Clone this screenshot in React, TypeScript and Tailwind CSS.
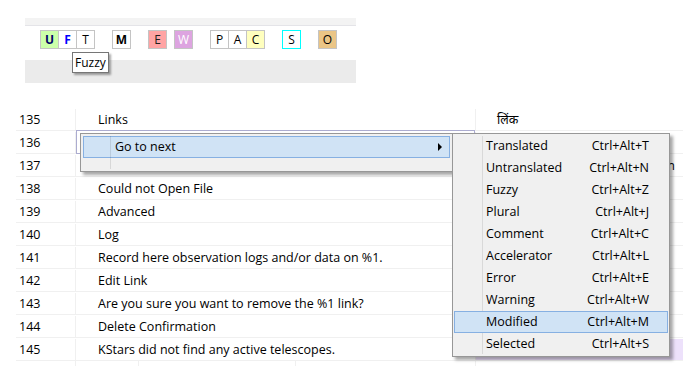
const font = "font-['Open_Sans','Noto_Sans',sans-serif]";

const filterButtons = [
  { key: "U", gap: "ml-0", cls: "bg-[#ccffaa] text-[#000066] font-bold" },
  { key: "F", gap: "-ml-px", cls: "bg-white text-[#0000ff] font-bold" },
  { key: "T", gap: "-ml-px", cls: "bg-white text-black" },
  { key: "M", gap: "ml-[17px]", cls: "bg-white text-black font-bold" },
  { key: "E", gap: "ml-[17px]", cls: "bg-[#ffa4a4] text-[#202020]" },
  { key: "W", gap: "ml-[7px]", cls: "bg-[#dda4e0] text-white" },
  { key: "P", gap: "ml-[17px]", cls: "bg-white text-black" },
  { key: "A", gap: "-ml-px", cls: "bg-white text-black" },
  { key: "C", gap: "-ml-px", cls: "bg-[#ffffbe] text-black" },
  { key: "S", gap: "ml-[17px]", cls: "bg-white text-black !border-[#00ffff]" },
  { key: "O", gap: "ml-[17px]", cls: "bg-[#eac586] text-black" },
];

const rows = [
  { n: 135, src: "Links", tr: "लिंक" },
  { n: 136, src: "", tr: "" },
  { n: 137, src: "", tr: "Translation" },
  { n: 138, src: "Could not Open File", tr: "" },
  { n: 139, src: "Advanced", tr: "" },
  { n: 140, src: "Log", tr: "" },
  { n: 141, src: "Record here observation logs and/or data on %1.", tr: "" },
  { n: 142, src: "Edit Link", tr: "" },
  { n: 143, src: "Are you sure you want to remove the %1 link?", tr: "" },
  { n: 144, src: "Delete Confirmation", tr: "" },
  { n: 145, src: "KStars did not find any active telescopes.", tr: "" },
];

const subItems = [
  { label: "Translated", keys: "Ctrl+Alt+T" },
  { label: "Untranslated", keys: "Ctrl+Alt+N" },
  { label: "Fuzzy", keys: "Ctrl+Alt+Z" },
  { label: "Plural", keys: "Ctrl+Alt+J" },
  { label: "Comment", keys: "Ctrl+Alt+C" },
  { label: "Accelerator", keys: "Ctrl+Alt+L" },
  { label: "Error", keys: "Ctrl+Alt+E" },
  { label: "Warning", keys: "Ctrl+Alt+W" },
  { label: "Modified", keys: "Ctrl+Alt+M", active: true },
  { label: "Selected", keys: "Ctrl+Alt+S" },
];

export default function App() {
  return (
    <div className={`relative h-[384px] w-[695px] overflow-hidden bg-white text-[12.5px] text-black ${font}`}>
      {/* filter bar */}
      <div className="ml-[25px] w-[331px] pt-[18px] text-[12px]">
        <div className="h-[8px] border-b border-[#e4e4e8] bg-[#f3f3f3]" />
        <div className="flex h-[34px] pl-[15px] pt-[4px]">
          {filterButtons.map((b) => (
            <div
              key={b.key}
              className={`flex h-[19px] w-[19px] items-center justify-center border border-[#c4c4c4] leading-none ${b.gap} ${b.cls}`}
            >
              {b.key}
            </div>
          ))}
        </div>
        <div className="h-[23px] bg-[#ebebeb]" />
      </div>

      {/* tooltip */}
      <div className="absolute left-[72px] top-[52px] border border-[#767676] bg-white px-[2px] text-[12px] leading-[19px] shadow-[2px_2px_2px_rgba(0,0,0,0.35)]">
        Fuzzy
      </div>

      {/* table */}
      <div className="ml-[16px] mt-[25px] w-[667px]">
        {rows.map((r) => (
          <div key={r.n} className="flex h-[23px] border-b border-[#f0f0f0] pt-px leading-[21px]">
            <div className="w-[60px] border-r border-[#f0f0f0] pl-[3px]">{r.n}</div>
            <div className="relative w-[400px] border-r border-[#f0f0f0] pl-[22px]">
              {r.n === 136 && (
                <div className="absolute -top-[2px] left-0 right-0 h-[24px] border border-[#acacd0]" />
              )}
              {r.src}
            </div>
            <div
              className={`flex-1 whitespace-nowrap pl-[21px] ${
                r.n === 145 ? "bg-[#ede1fb]" : ""
              } ${r.n === 137 ? "flex justify-end pr-[8px]" : ""}`}
            >
              {r.tr}
            </div>
          </div>
        ))}
        <div className="flex h-[5px]">
          <div className="w-[60px] border-r border-[#f0f0f0]" />
          <div className="w-[63px] border-r border-[#f0f0f0]" />
          <div className="w-[157px] border-r border-[#f0f0f0]" />
          <div className="w-[180px] border-r border-[#f0f0f0]" />
        </div>
      </div>

      {/* context menu */}
      <div className="absolute left-[80px] top-[133px] h-[39px] w-[373px] border border-[#979797] bg-[#f0f0f0] p-[2px] shadow-[3px_3px_3px_rgba(0,0,0,0.35)]">
        <div className="flex h-[22px] items-center justify-between border border-[#86b0e2] bg-[#d0e3f5] pl-[31px] pr-[6px]">
          <span>Go to next</span>
          <svg width="5" height="8" viewBox="0 0 5 8">
            <polygon points="0,0 4,4 0,8" fill="#000" />
          </svg>
        </div>
        <div className="absolute bottom-[2px] left-[29px] top-[2px] w-px bg-black/10" />
      </div>

      {/* submenu */}
      <div className="absolute left-[452px] top-[133px] w-[218px] border border-[#979797] bg-[#f0f0f0] p-px shadow-[3px_3px_3px_rgba(0,0,0,0.35)]">
        <div className="absolute bottom-[2px] left-[29px] top-[2px] w-px bg-[#d9d9d9]" />
        {subItems.map((it) => (
          <div
            key={it.label}
            className={`relative flex h-[22px] items-center justify-between border pl-[31px] pr-[18px] pt-px ${
              it.active ? "border-[#86b0e2] bg-[#d0e3f5]" : "border-transparent"
            }`}
          >
            <span>{it.label}</span>
            <span>{it.keys}</span>
          </div>
        ))}
      </div>
    </div>
  );
}
